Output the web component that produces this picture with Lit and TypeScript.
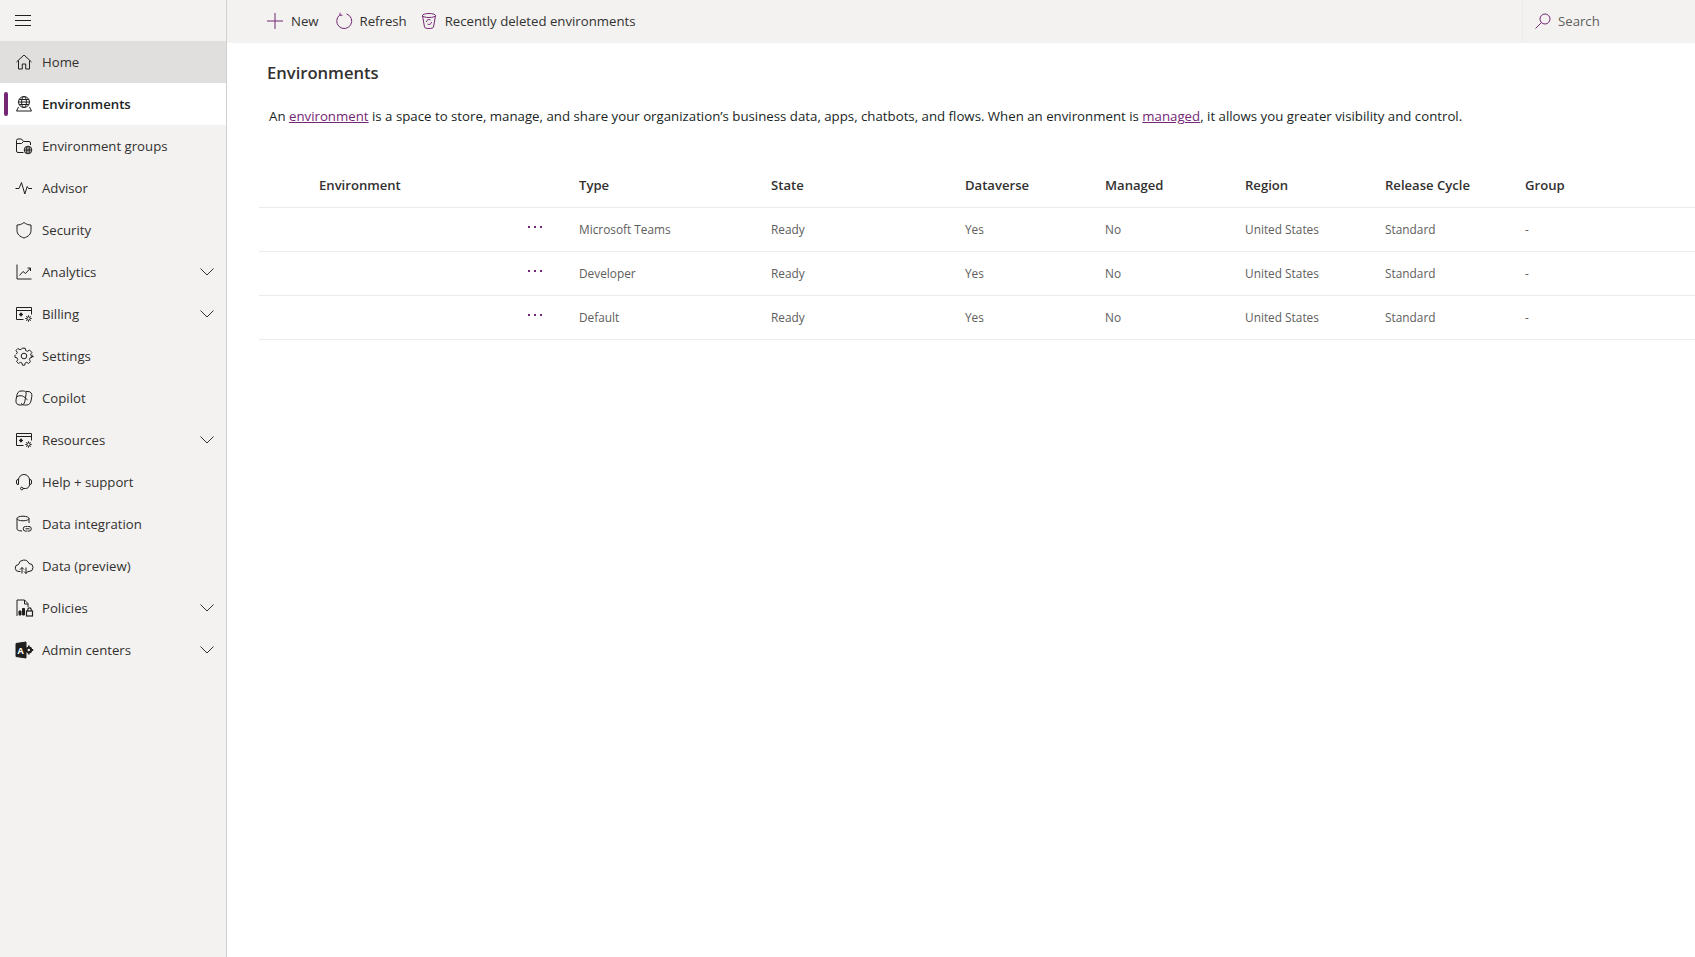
import { LitElement, html, css, svg } from 'lit';
import { customElement, state } from 'lit/decorators.js';

interface NavItem {
  label: string;
  icon: unknown;
  expandable?: boolean;
}

const ICONS: Record<string, unknown> = {
  home: svg`<path d="M2.500 10 10 3l7.500 7M4.500 8.500V17h3.800v-5h3.400v5h3.800V8.500"/>`,
  globe: svg`<circle cx="10" cy="8" r="5.500"/><ellipse cx="10" cy="8" rx="2.400" ry="5.500"/><path d="M4.500 8h11M5.200 5.500h9.600M5.200 10.500h9.600M4.500 13 2.500 17h15l-2-4"/>`,
  folder: svg`<path d="M9.500 16.500H4a1.500 1.500 0 0 1-1.500-1.500V4.500A1.500 1.500 0 0 1 4 3h3.500l2 2.500H15A1.500 1.500 0 0 1 16.500 7v2M2.500 7.500h5l2-2"/><circle cx="14" cy="14" r="3.800"/><path d="M10.200 14h7.600M14 10.200v7.600M12.300 10.800v6.400M15.700 10.800v6.400"/>`,
  pulse: svg`<path d="M1.500 10.500H5l2.500-6 3.300 11.500 2.400-7.500 1.300 2h3.500"/>`,
  shield: svg`<path d="M10 2.500c2 1.700 4.500 2.500 7 2.500v5.500c0 3.500-2.500 6-7 7.500-4.500-1.500-7-4-7-7.500V5c2.500 0 5-.8 7-2.500Z"/>`,
  chart: svg`<path d="M3 2.500V17h14.500M5.500 13.500l3.500-4 2.500 2 5-5.500M13.500 6h3v3"/>`,
  billing: svg`<path d="M9.500 15.500h-7v-12h15v7M2.500 6.500h15"/><circle cx="7" cy="10.500" r="1.200"/><path d="M7 8.500v4M5 10.500h4"/><circle cx="14.500" cy="14.500" r="1.700"/><path d="M14.500 11.300v1.500M14.500 16.200v1.500M11.300 14.500h1.500M16.200 14.500h1.500M12.300 12.300l1 1M15.700 15.700l1 1M12.300 16.700l1-1M15.700 13.300l1-1"/>`,
  gear: svg`<circle cx="10" cy="10" r="2.800"/><path d="M8.300 2.200h3.400l.5 2.300 1.800.8 2-1.300 2.400 2.400-1.300 2 .8 1.800 2.300.5" transform="translate(-.5 0)"/><path d="M18 8.700v2.600l-2.200.6-.7 1.700 1.200 2-1.900 1.900-2-1.200-1.700.7-.5 2.200H7.800l-.5-2.200-1.700-.7-2 1.200-1.900-1.900 1.200-2-.7-1.700L0 11.300V8.700" transform="translate(1 0) scale(.95 1)"/><path d="M2.500 8.200l.7-1.800-1.200-2 1.900-1.900 2 1.200 1.800-.7"/>`,
  copilot: svg`<path d="M7 3h2.500c2 0 3 1.300 2.600 3.200l-1.300 7.300C10.400 15.800 9 17 7 17H6c-3 0-4.500-2-4-5l.6-3.500C3.100 5 4.500 3 7 3Z"/><path d="M12 3.500h2c2.800 0 4.300 2 3.800 5l-.6 3.500c-.5 3.200-2 5-4.500 5h-2.500c-1.500 0-2.500-.7-2.800-1.700M2.500 9c2-1.500 5-1.800 7-.5 2 1.200 3 2.800 4 3.300"/>`,
  headset: svg`<path d="M4.500 12.500V8a5.500 5.500 0 0 1 11 0v4.500M4.500 7.500H4A1.500 1.500 0 0 0 2.500 9v2A1.500 1.500 0 0 0 4 12.500h.5M15.500 7.500h.5A1.500 1.500 0 0 1 17.500 9v2a1.500 1.500 0 0 1-1.500 1.500h-.5M15.500 12.500c0 2.200-1.500 4-4 4H9"/><circle cx="7.800" cy="16.500" r="1.300"/>`,
  database: svg`<ellipse cx="9" cy="4.500" rx="6" ry="2.300"/><path d="M3 4.500V15c0 1 1.500 1.800 5 2M15 4.500V9"/><path d="M13 12.500h-1.500a2.300 2.300 0 0 0 0 4.600H13M13.500 17.100H15a2.300 2.300 0 0 0 0-4.600h-1.500M11.500 14.800h4"/>`,
  cloud: svg`<path d="M6.500 15.500H5a3.500 3.500 0 0 1-.5-7A5.500 5.500 0 0 1 15 7.500a3.800 3.800 0 0 1 0 8h-1.500M8 17.500v-6M6 13.500l2-2 2 2M12 11.500v6M10 15.500l2 2 2-2"/>`,
  policies: svg`<path d="M3 18V2h7.500L14 5.500V9M10.500 2v4H14"/><path d="M5 13h2v4H5zM8.500 10.500h2V17h-2z" fill="#201f1e"/><rect x="12.500" y="13" width="6" height="5" stroke-width="1.200"/><path d="M13.800 13v-1.500a1.700 1.700 0 0 1 3.400 0V13" stroke-width="1.200"/>`,
  admin: svg`<path d="M2 3.500 12 2v16L2 16.500Z" fill="#201f1e"/><text x="3.600" y="13.500" font-size="9" font-weight="700" fill="#fff" stroke="none" font-family="Open Sans, sans-serif">A</text><circle cx="14.800" cy="10" r="2.200" stroke-width="2"/><path d="M14.800 5.500v2M14.800 12.500v2M17.300 7.500l-1 1M17.300 12.500l-1-1M19.200 10h-2" stroke-width="1.800"/>`,
};

const icon = (name: string) => html`<svg class="nav-icon" viewBox="0 0 20 20">${ICONS[name]}</svg>`;

const NAV: NavItem[] = [
  { label: 'Home', icon: icon('home') },
  { label: 'Environments', icon: icon('globe') },
  { label: 'Environment groups', icon: icon('folder') },
  { label: 'Advisor', icon: icon('pulse') },
  { label: 'Security', icon: icon('shield') },
  { label: 'Analytics', icon: icon('chart'), expandable: true },
  { label: 'Billing', icon: icon('billing'), expandable: true },
  { label: 'Settings', icon: icon('gear') },
  { label: 'Copilot', icon: icon('copilot') },
  { label: 'Resources', icon: icon('billing'), expandable: true },
  { label: 'Help + support', icon: icon('headset') },
  { label: 'Data integration', icon: icon('database') },
  { label: 'Data (preview)', icon: icon('cloud') },
  { label: 'Policies', icon: icon('policies'), expandable: true },
  { label: 'Admin centers', icon: icon('admin'), expandable: true },
];

const COLUMNS = ['Type', 'State', 'Dataverse', 'Managed', 'Region', 'Release Cycle', 'Group'];

const ROWS = ['Microsoft Teams', 'Developer', 'Default'];

@customElement('app-root')
export class AppRoot extends LitElement {

  @state()
  private selected = 'Environments';

  static styles = css`
    :host {
      display: flex;
      height: 957px;
      overflow: hidden;
      background: #fff;
      color: #323130;
      font-family: "Open Sans", "Noto Sans", sans-serif;
      font-size: 13.2px;
    }

    * {
      box-sizing: border-box;
    }

    .sidebar {
      width: 227px;
      flex: none;
      background: #f3f2f1;
      border-right: 1px solid #d2d0ce;
    }

    .burger {
      height: 41px;
      display: flex;
      align-items: center;
      padding-left: 15px;
    }

    .burger svg {
      width: 16px;
      height: 12px;
      stroke: #201f1e;
      fill: none;
    }

    .nav-item {
      position: relative;
      height: 42px;
      display: flex;
      align-items: center;
      padding-left: 14px;
      padding-right: 12px;
    }

    .nav-item.first {
      background: #e1dfdd;
    }

    .nav-item.active {
      background: #fff;
      font-weight: 600;
      color: #201f1e;
    }

    .nav-item.active::before {
      content: '';
      position: absolute;
      left: 4px;
      top: 9px;
      width: 4px;
      height: 24px;
      border-radius: 2px;
      background: #742774;
    }

    .nav-icon {
      width: 20px;
      height: 20px;
      flex: none;
      margin-right: 8px;
      fill: none;
      stroke: #201f1e;
      stroke-width: 1;
    }

    .nav-label {
      flex: 1;
    }

    .chevron {
      width: 14px;
      height: 8px;
      fill: none;
      stroke: #323130;
    }

    .main {
      flex: 1;
      min-width: 0;
    }

    .commandbar {
      height: 43px;
      display: flex;
      align-items: center;
      background: #f3f2f1;
      padding-left: 39px;
      padding-bottom: 1px;
    }

    .command {
      display: flex;
      align-items: center;
      gap: 7px;
      margin-right: 16px;
    }

    .command.tight {
      margin-right: 13px;
    }

    .command svg {
      width: 18px;
      height: 18px;
      flex: none;
      fill: none;
      stroke: #742774;
      stroke-width: 1;
    }

    .search {
      margin-left: auto;
      width: 173px;
      height: 43px;
      display: flex;
      align-items: center;
      gap: 6px;
      padding-left: 11px;
      border-left: 1px solid #edebe9;
      color: #605e5c;
    }

    .search svg {
      width: 18px;
      height: 18px;
      fill: none;
      stroke: #742774;
    }

    .content {
      padding: 18px 0 0 27px;
    }

    h1 {
      margin: 0 0 0 13px;
      font-size: 16.6px;
      line-height: 24px;
      font-weight: 600;
    }

    .intro {
      margin: 21px 0 0 15px;
      line-height: 20px;
      font-size: 13.26px;
      color: #201f1e;
    }

    a {
      color: #742774;
      text-decoration: underline;
    }

    .table {
      margin: 37px 0 0 5px;
    }

    .row {
      display: grid;
      grid-template-columns: 320px 192px 194px 140px 140px 140px 140px 1fr;
      height: 44px;
      padding-bottom: 2px;
      align-items: center;
      border-bottom: 1px solid #edebe9;
      font-size: 11.85px;
      color: #605e5c;
    }

    .row.head {
      height: 45px;
      padding-bottom: 1px;
      font-size: 13.1px;
      font-weight: 600;
      color: #323130;
    }

    .env-name {
      padding-left: 60px;
    }

    .more {
      text-align: right;
      padding-right: 36px;
      align-self: start;
      padding-top: 8px;
    }

    .more svg {
      width: 16px;
      height: 4px;
      fill: #742774;
    }
  `;

  render() {
    return html`
      <nav class="sidebar">
        <div class="burger">
          <svg viewBox="0 0 16 12"><path d="M0 .5h16M0 5.500h16M0 10.500h16"/></svg>
        </div>
        ${NAV.map((item, i) => html`
          <div class="nav-item ${i === 0 ? 'first' : ''} ${item.label === this.selected ? 'active' : ''}">
            ${item.icon}
            <span class="nav-label">${item.label}</span>
            ${item.expandable ? html`<svg class="chevron" viewBox="0 0 14 8"><path d="M.5.500 7 7l6.500-6.500"/></svg>` : ''}
          </div>
        `)}
      </nav>
      <div class="main">
        <div class="commandbar">
          <div class="command">
            <svg viewBox="0 0 18 18"><path d="M9 1v16M1 9h16"/></svg>
            New
          </div>
          <div class="command tight">
            <svg viewBox="0 0 18 18"><path d="M11.500 1.900a7.500 7.500 0 1 1-6.600 1M5 .8v2.400h2.500"/></svg>
            Refresh
          </div>
          <div class="command">
            <svg viewBox="0 0 18 18"><ellipse cx="9" cy="3.500" rx="6.500" ry="2"/><path d="M2.500 3.500 4.500 15c.2 1 2 1.500 4.500 1.500s4.300-.5 4.500-1.500l2-11.500M6.500 10a2.500 2.500 0 0 1 4-2M11.500 10a2.500 2.500 0 0 1-4 2"/></svg>
            Recently deleted environments
          </div>
          <div class="search">
            <svg viewBox="0 0 18 18"><circle cx="11" cy="7" r="5"/><path d="M7.500 10.500 1.500 16.500"/></svg>
            Search
          </div>
        </div>
        <div class="content">
          <h1>Environments</h1>
          <p class="intro">An <a>environment</a> is a space to store, manage, and share your organization’s business data, apps, chatbots, and flows. When an environment is <a>managed</a>, it allows you greater visibility and control.</p>
          <div class="table">
            <div class="row head">
              <span class="env-name">Environment</span>
              ${COLUMNS.map(c => html`<span>${c}</span>`)}
            </div>
            ${ROWS.map(type => html`
              <div class="row">
                <span class="more"><svg viewBox="0 0 16 4"><rect x="1" y="1" width="2" height="2"/><rect x="7" y="1" width="2" height="2"/><rect x="13" y="1" width="2" height="2"/></svg></span>
                <span>${type}</span>
                <span>Ready</span>
                <span>Yes</span>
                <span>No</span>
                <span>United States</span>
                <span>Standard</span>
                <span>-</span>
              </div>
            `)}
          </div>
        </div>
      </div>
    `;
  }
}
